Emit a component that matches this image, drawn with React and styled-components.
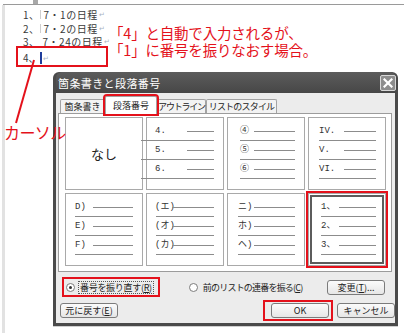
import React from 'react';
import styled, { createGlobalStyle } from 'styled-components';

const GlobalStyle = createGlobalStyle`
  html, body {
    margin: 0;
    padding: 0;
    background: #fff;
  }
  * {
    box-sizing: border-box;
  }
`;

const JP = `"Noto Sans CJK JP", "Noto Sans", sans-serif`;
const RED = '#e4111b';

const Page = styled.div`
  position: relative;
  width: 404px;
  height: 333px;
  overflow: hidden;
  background: #fff;
  font-family: ${JP};
  display: flex;
  flex-direction: column;
`;

const Ruler = styled.div`
  height: 5px;
  margin-left: 3px;
  border-bottom: 1px solid #9a9a9a;
  display: flex;
`;

const RulerTick = styled.span`
  width: 5px;
  height: 4px;
  margin-left: 30px;
  background: #a8a8a8;
`;

const Sheet = styled.div`
  flex: 1;
  margin-left: 2px;
  border-left: 3px solid #e2e2e2;
  display: flex;
  flex-direction: column;
`;

const TopArea = styled.div`
  display: flex;
  align-items: flex-start;
  height: 61px;
`;

const DocColumn = styled.div`
  width: 92px;
  flex-shrink: 0;
  margin-left: 11px;
  padding-top: 3px;
  display: flex;
  flex-direction: column;
`;

const DocLine = styled.div`
  height: 13.5px;
  line-height: 13.5px;
  padding-left: 7px;
  font-size: 10px;
  letter-spacing: 0.5px;
  color: #3a3a3a;
  white-space: nowrap;
  display: flex;
  align-items: center;
`;

const TabMark = styled.span`
  display: inline-block;
  width: 1px;
  height: 9px;
  margin: 0 3px 0 0;
  background: #cfcfcf;
`;

const ParaMark = styled.span`
  font-size: 7px;
  color: #a9b3c4;
  margin-left: 1px;
`;

const CurrentLine = styled.div`
  margin-top: -3px;
  height: 21px;
  border: 2px solid ${RED};
  padding-left: 5px;
  padding-top: 3px;
  font-size: 10px;
  color: #3a3a3a;
  display: flex;
  align-items: center;
`;

const Caret = styled.span`
  display: inline-block;
  width: 2px;
  height: 12px;
  margin-left: 1px;
  background: #1f3d9c;
`;

const Headline = styled.div`
  margin-top: 19px;
  margin-left: 1px;
  font-size: 14.5px;
  line-height: 17px;
  color: ${RED};
  white-space: nowrap;
  letter-spacing: -0.2px;
`;

const Dialog = styled.div`
  width: 345px;
  height: 254px;
  margin-left: 48px;
  margin-top: 6px;
  display: flex;
  flex-direction: column;
  background: #4a4a4a;
  border-radius: 6px 6px 0 0;
  padding: 0 3px 3px 3px;
  box-shadow: 0 1px 0 #cfcfcf;
`;

const TitleBar = styled.div`
  height: 21px;
  display: flex;
  align-items: center;
  justify-content: space-between;
  padding: 0 0 0 2px;
  margin-right: -1px;
  background: linear-gradient(#5c5c5c, #474747);
  border-radius: 6px 6px 0 0;
`;

const Title = styled.span`
  font-size: 11px;
  letter-spacing: 0.4px;
  color: #fff;
`;

const CloseButton = styled.span`
  width: 16px;
  height: 16px;
  display: flex;
  align-items: center;
  justify-content: center;
  background: #8d8d8d;
  border: 1px solid #d8d8d8;
  border-radius: 2px;
`;

const Body = styled.div`
  flex: 1;
  background: #ececec;
  padding: 3px 0 2px 2px;
  display: flex;
  flex-direction: column;
`;

const Tabs = styled.div`
  height: 17px;
  display: flex;
  align-items: flex-end;
  padding-left: 2px;
`;

const Tab = styled.span`
  width: ${p => p.$w}px;
  height: ${p => (p.$active ? 18 : 14)}px;
  margin-bottom: ${p => (p.$active ? -1 : 0)}px;
  display: flex;
  align-items: center;
  justify-content: center;
  font-size: 9px;
  letter-spacing: ${p => p.$ls || 0}px;
  color: #222;
  white-space: nowrap;
  background: ${p => (p.$active ? '#fff' : '#f3f3f3')};
  border: 1px solid #a3a3a3;
  border-bottom: none;
  border-radius: 2px 2px 0 0;
  position: relative;
  z-index: ${p => (p.$active ? 2 : 1)};
  outline: ${p => (p.$active ? `2px solid ${RED}` : 'none')};
  outline-offset: 0;
`;

const Panel = styled.div`
  height: 159px;
  margin-right: 3px;
  background: #fff;
  border: 1px solid #9c9c9c;
  padding: 3px 5px 5px 6px;
  display: grid;
  grid-template-columns: repeat(4, 78px);
  grid-template-rows: repeat(2, 73px);
  gap: 3px;
`;

const Cell = styled.div`
  border: 1px solid #a9a9a9;
  background: #fff;
  padding: 8px 9px 0 ${p => p.$pad}px;
  display: flex;
  flex-direction: column;
  box-shadow: ${p => (p.$selected ? 'inset 0 0 0 1px #fff, inset 0 0 0 3px #5c5c5c' : 'none')};
  outline: ${p => (p.$selected ? `2px solid ${RED}` : 'none')};
  outline-offset: 0;
`;

const NoneCell = styled(Cell)`
  padding: 0;
  align-items: center;
  justify-content: center;
  font-size: 13px;
  color: #222;
`;

const Item = styled.div`
  height: 19px;
  display: flex;
  flex-direction: column;
`;

const ItemHead = styled.div`
  height: 10px;
  display: flex;
  align-items: center;
`;

const Label = styled.span`
  width: ${p => p.$w}px;
  flex-shrink: 0;
  font-size: 9px;
  line-height: 10px;
  color: #333;
  white-space: nowrap;
  font-family: "Liberation Mono", ${JP};
`;

const Rule = styled.span`
  flex: 1;
  height: 1px;
  background: #8c8c8c;
`;

const SubRule = styled.span`
  height: 1px;
  margin-top: 4px;
  margin-left: ${p => p.$indent}px;
  background: #8c8c8c;
`;

const OptionsRow = styled.div`
  height: 20px;
  margin-top: 5px;
  display: flex;
  align-items: center;
`;

const Option = styled.label`
  display: flex;
  align-items: center;
  gap: 3px;
  height: 20px;
  margin-left: ${p => p.$ml}px;
  padding: 0 4px 0 2px;
  border: 2px solid ${p => (p.$marked ? RED : 'transparent')};
  font-size: 9px;
  letter-spacing: ${p => p.$ls || 0}px;
  color: #222;
  white-space: nowrap;
`;

const Radio = styled.span`
  width: 9px;
  height: 9px;
  border-radius: 50%;
  border: 1px solid #7c7c7c;
  background: #fff;
  display: flex;
  align-items: center;
  justify-content: center;

  &::after {
    content: '';
    width: 3px;
    height: 3px;
    border-radius: 50%;
    background: ${p => (p.$checked ? '#333' : 'transparent')};
  }
`;

const OptionText = styled.span`
  padding: 0 1px;
  border: 1px dotted ${p => (p.$focus ? '#555' : 'transparent')};
  line-height: 11px;
`;

const Button = styled.span`
  width: ${p => p.$w || 58}px;
  height: 15px;
  display: flex;
  align-items: center;
  justify-content: center;
  font-size: 9px;
  color: #222;
  white-space: nowrap;
  background: linear-gradient(#fbfbfb, #e6e6e6);
  border: 1px solid #7b7b7b;
  border-radius: 3px;
`;

const ButtonRow = styled.div`
  height: 21px;
  margin-top: 3px;
  display: flex;
  align-items: center;
  padding-left: 2px;
`;

const ChangeButton = styled(Button)`
  margin-left: auto;
  margin-right: 10px;
`;

const Marked = styled.span`
  margin-left: auto;
  padding: 1px 2px 1px 6px;
  border: 2px solid ${RED};
  display: flex;
`;

const CancelButton = styled(Button)`
  margin-left: 4px;
`;

const Arrow = styled.svg`
  position: absolute;
  left: 0;
  top: 0;
  pointer-events: none;
`;

const CursorNote = styled.span`
  position: absolute;
  left: 4px;
  top: 122px;
  font-size: 16px;
  line-height: 20px;
  color: ${RED};
  letter-spacing: -0.6px;
`;

const cells = [
  { labels: ['4.', '5.', '6.'], labelX: 9, firstX: 41, secondX: 27 },
  { labels: ['④', '⑤', '⑥'], labelX: 13, firstX: 27, secondX: 27 },
  { labels: ['IV.', 'V.', 'VI.'], labelX: 11, firstX: 36, secondX: 36 },
  { labels: ['D)', 'E)', 'F)'], labelX: 10, firstX: 28, secondX: 28 },
  { labels: ['(エ)', '(オ)', '(カ)'], labelX: 9, firstX: 26, secondX: 27 },
  { labels: ['ニ)', 'ホ)', 'ヘ)'], labelX: 11, firstX: 27, secondX: 27 },
  { labels: ['1、', '2、', '3、'], labelX: 13, firstX: 31, secondX: 31, selected: true }
];

const docLines = ['1、', '2、', '3、'];
const docTail = ['7・1の日程', '7・2の日程', '7・24の日程'];

const NumberCell = ({ labels, labelX, firstX, secondX, selected }) => (
  <Cell $pad={labelX - 1} $selected={selected}>
    {labels.map(label => (
      <Item key={label}>
        <ItemHead>
          <Label $w={firstX - labelX}>{label}</Label>
          <Rule />
        </ItemHead>
        <SubRule $indent={secondX - firstX} />
      </Item>
    ))}
  </Cell>
);

const App = () => (
  <Page>
    <GlobalStyle />
    <Ruler>
      <RulerTick />
    </Ruler>
    <Sheet>
      <TopArea>
        <DocColumn>
          {docLines.map((head, i) => (
            <DocLine key={head}>
              {head}
              <TabMark />
              {docTail[i]}
              <ParaMark>↵</ParaMark>
            </DocLine>
          ))}
          <CurrentLine>
            4、
            <Caret />
            <ParaMark>↵</ParaMark>
          </CurrentLine>
        </DocColumn>
        <Headline>
          「4」と自動で入力されるが、
          <br />
          「1」に番号を振りなおす場合。
        </Headline>
      </TopArea>

      <Dialog>
        <TitleBar>
          <Title>箇条書きと段落番号</Title>
          <CloseButton>
            <svg width="10" height="10" viewBox="0 0 10 10">
              <path d="M1.5 1.5 L8.5 8.5 M8.5 1.5 L1.5 8.5" stroke="#fff" strokeWidth="2.2" strokeLinecap="square" />
            </svg>
          </CloseButton>
        </TitleBar>
        <Body>
          <Tabs>
            <Tab $w={45}>箇条書き</Tab>
            <Tab $w={52} $active>段落番号</Tab>
            <Tab $w={49} $ls={-1.2}>アウトライン</Tab>
            <Tab $w={71} $ls={-0.8}>リストのスタイル</Tab>
          </Tabs>
          <Panel>
            <NoneCell>なし</NoneCell>
            {cells.map(cell => (
              <NumberCell key={cell.labels[0]} {...cell} />
            ))}
          </Panel>
          <OptionsRow>
            <Option $ml={4} $marked $ls={-0.3}>
              <Radio $checked />
              <OptionText $focus>
                番号を振り直す(<u>R</u>)
              </OptionText>
            </Option>
            <Option $ml={25} $ls={-0.8}>
              <Radio />
              <OptionText>
                前のリストの連番を振る(<u>C</u>)
              </OptionText>
            </Option>
            <ChangeButton>
              変更(<u>T</u>)...
            </ChangeButton>
          </OptionsRow>
          <ButtonRow>
            <Button>
              元に戻す(<u>E</u>)
            </Button>
            <Marked>
              <Button>OK</Button>
            </Marked>
            <CancelButton>キャンセル</CancelButton>
          </ButtonRow>
        </Body>
      </Dialog>
    </Sheet>

    <Arrow width="404" height="333">
      <line x1="34" y1="60" x2="16" y2="123" stroke={RED} strokeWidth="2" />
    </Arrow>
    <CursorNote>カーソル</CursorNote>
  </Page>
);

export default App;
